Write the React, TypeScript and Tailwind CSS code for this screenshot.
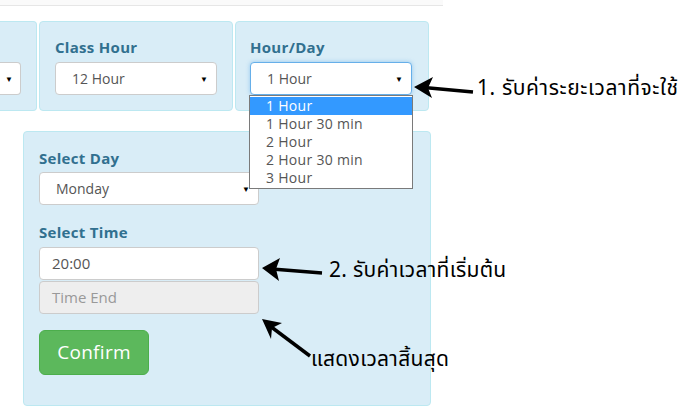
const font = "font-['Open_Sans','Noto_Sans',sans-serif]";
const thai = "font-['Noto_Sans_Thai','Noto_Sans',sans-serif]";

function FakeSelect({ value, focused, className }: { value: string; focused?: boolean; className?: string }) {
  return (
    <div
      className={`flex h-[33px] items-center justify-between rounded-[4px] border bg-white pl-[16px] pr-[8px] text-[14px] text-[#555] ${
        focused ? "border-[#66afe9] shadow-[0_0_4px_rgba(102,175,233,0.6)]" : "border-[#ccc]"
      } ${className ?? ""}`}
    >
      <span>{value}</span>
      <span className="text-[8px] text-black">▼</span>
    </div>
  );
}

const options = ["1 Hour", "1 Hour 30 min", "2 Hour", "2 Hour 30 min", "3 Hour"];

export default function App() {
  return (
    <div className={`relative h-[417px] w-[699px] overflow-hidden bg-white ${font}`}>
      <div className="h-[6px] w-[443px] border-b border-[#e6e6e6] bg-[#fafafa]" />

      {/* top row */}
      <div className="mt-[15px] flex gap-[2px]">
        <div className="h-[90px] w-[37px] rounded-r-[4px] border border-l-0 border-[#bce8f1] bg-[#d9edf7] pt-[40px]">
          <div className="flex h-[33px] w-[21px] items-center justify-end rounded-r-[4px] border border-l-0 border-[#ccc] bg-white pr-[7px]">
            <span className="text-[8px] text-black">▼</span>
          </div>
        </div>
        <div className="h-[90px] w-[194px] rounded-[4px] border border-[#bce8f1] bg-[#d9edf7] px-[15px] pt-[15px]">
          <div className="mb-[5px] text-[15px] font-bold leading-[20px] tracking-[0.3px] text-[#31708f]">Class Hour</div>
          <FakeSelect value="12 Hour" />
        </div>
        <div className="relative h-[90px] w-[194px] rounded-[4px] border border-[#bce8f1] bg-[#d9edf7] pl-[14px] pr-[16px] pt-[15px]">
          <div className="mb-[5px] text-[15px] font-bold leading-[20px] tracking-[0.3px] text-[#31708f]">Hour/Day</div>
          <FakeSelect value="1 Hour" focused />
          {/* open dropdown */}
          <div className="absolute left-[13px] top-[73px] z-10 w-[164px] border border-[#7a7a7a] bg-white py-[1px] text-[14px] leading-[18px] text-[#555]">
            {options.map((o, i) => (
              <div key={o} className={`h-[18px] pl-[16px] tracking-[0.3px] ${i === 0 ? "bg-[#3399ff] text-white" : ""}`}>
                {o}
              </div>
            ))}
          </div>
        </div>
      </div>

      {/* bottom panel */}
      <div className="ml-[23px] mt-[20px] h-[275px] w-[408px] rounded-[4px] border border-[#bce8f1] bg-[#d9edf7] px-[15px] pt-[16px]">
        <div className="mb-[4px] text-[15px] font-bold leading-[20px] tracking-[0.3px] text-[#31708f]">Select Day</div>
        <FakeSelect value="Monday" className="w-[220px]" />
        <div className="mb-[5px] mt-[17px] text-[15px] font-bold leading-[20px] tracking-[0.3px] text-[#31708f]">Select Time</div>
        <div className="flex h-[33px] w-[220px] items-center rounded-[4px] border border-[#ccc] bg-white pl-[12px] text-[15px] text-[#555]">
          20:00
        </div>
        <div className="mt-[1px] flex h-[33px] w-[220px] items-center rounded-[4px] border border-[#ccc] bg-[#eee] pl-[12px] text-[15px] text-[#999]">
          Time End
        </div>
        <button className="mt-[16px] h-[45px] w-[110px] rounded-[6px] border border-[#4cae4c] bg-[#5cb85c] text-[19px] tracking-[0.3px] text-white">
          Confirm
        </button>
      </div>

      {/* annotations */}
      <svg className="pointer-events-none absolute inset-0" width="699" height="417">
        <line x1="473" y1="92" x2="424" y2="87.5" stroke="black" strokeWidth="3.5" />
        <polygon points="414,87 433,77 428,88 432,98" fill="black" />
        <line x1="322" y1="273" x2="272" y2="269" stroke="black" strokeWidth="3.5" />
        <polygon points="262,268 280,258 276,269 279,281" fill="black" />
        <line x1="310" y1="356" x2="270" y2="326" stroke="black" strokeWidth="3.5" />
        <polygon points="262,319 282,323 272,328 271,339" fill="black" />
      </svg>
      <div className={`absolute left-[477px] top-[74px] ${thai} text-[21px] leading-[30px] tracking-[0.6px] text-black`}>
        1. รับค่าระยะเวลาที่จะใช้
      </div>
      <div className={`absolute left-[329px] top-[256px] ${thai} text-[21px] leading-[30px] tracking-[0.3px] text-black`}>
        2. รับค่าเวลาที่เริ่มต้น
      </div>
      <div className={`absolute left-[311px] top-[345px] ${thai} text-[21px] leading-[30px] tracking-[0.3px] text-black`}>
        แสดงเวลาสิ้นสุด
      </div>
    </div>
  );
}
